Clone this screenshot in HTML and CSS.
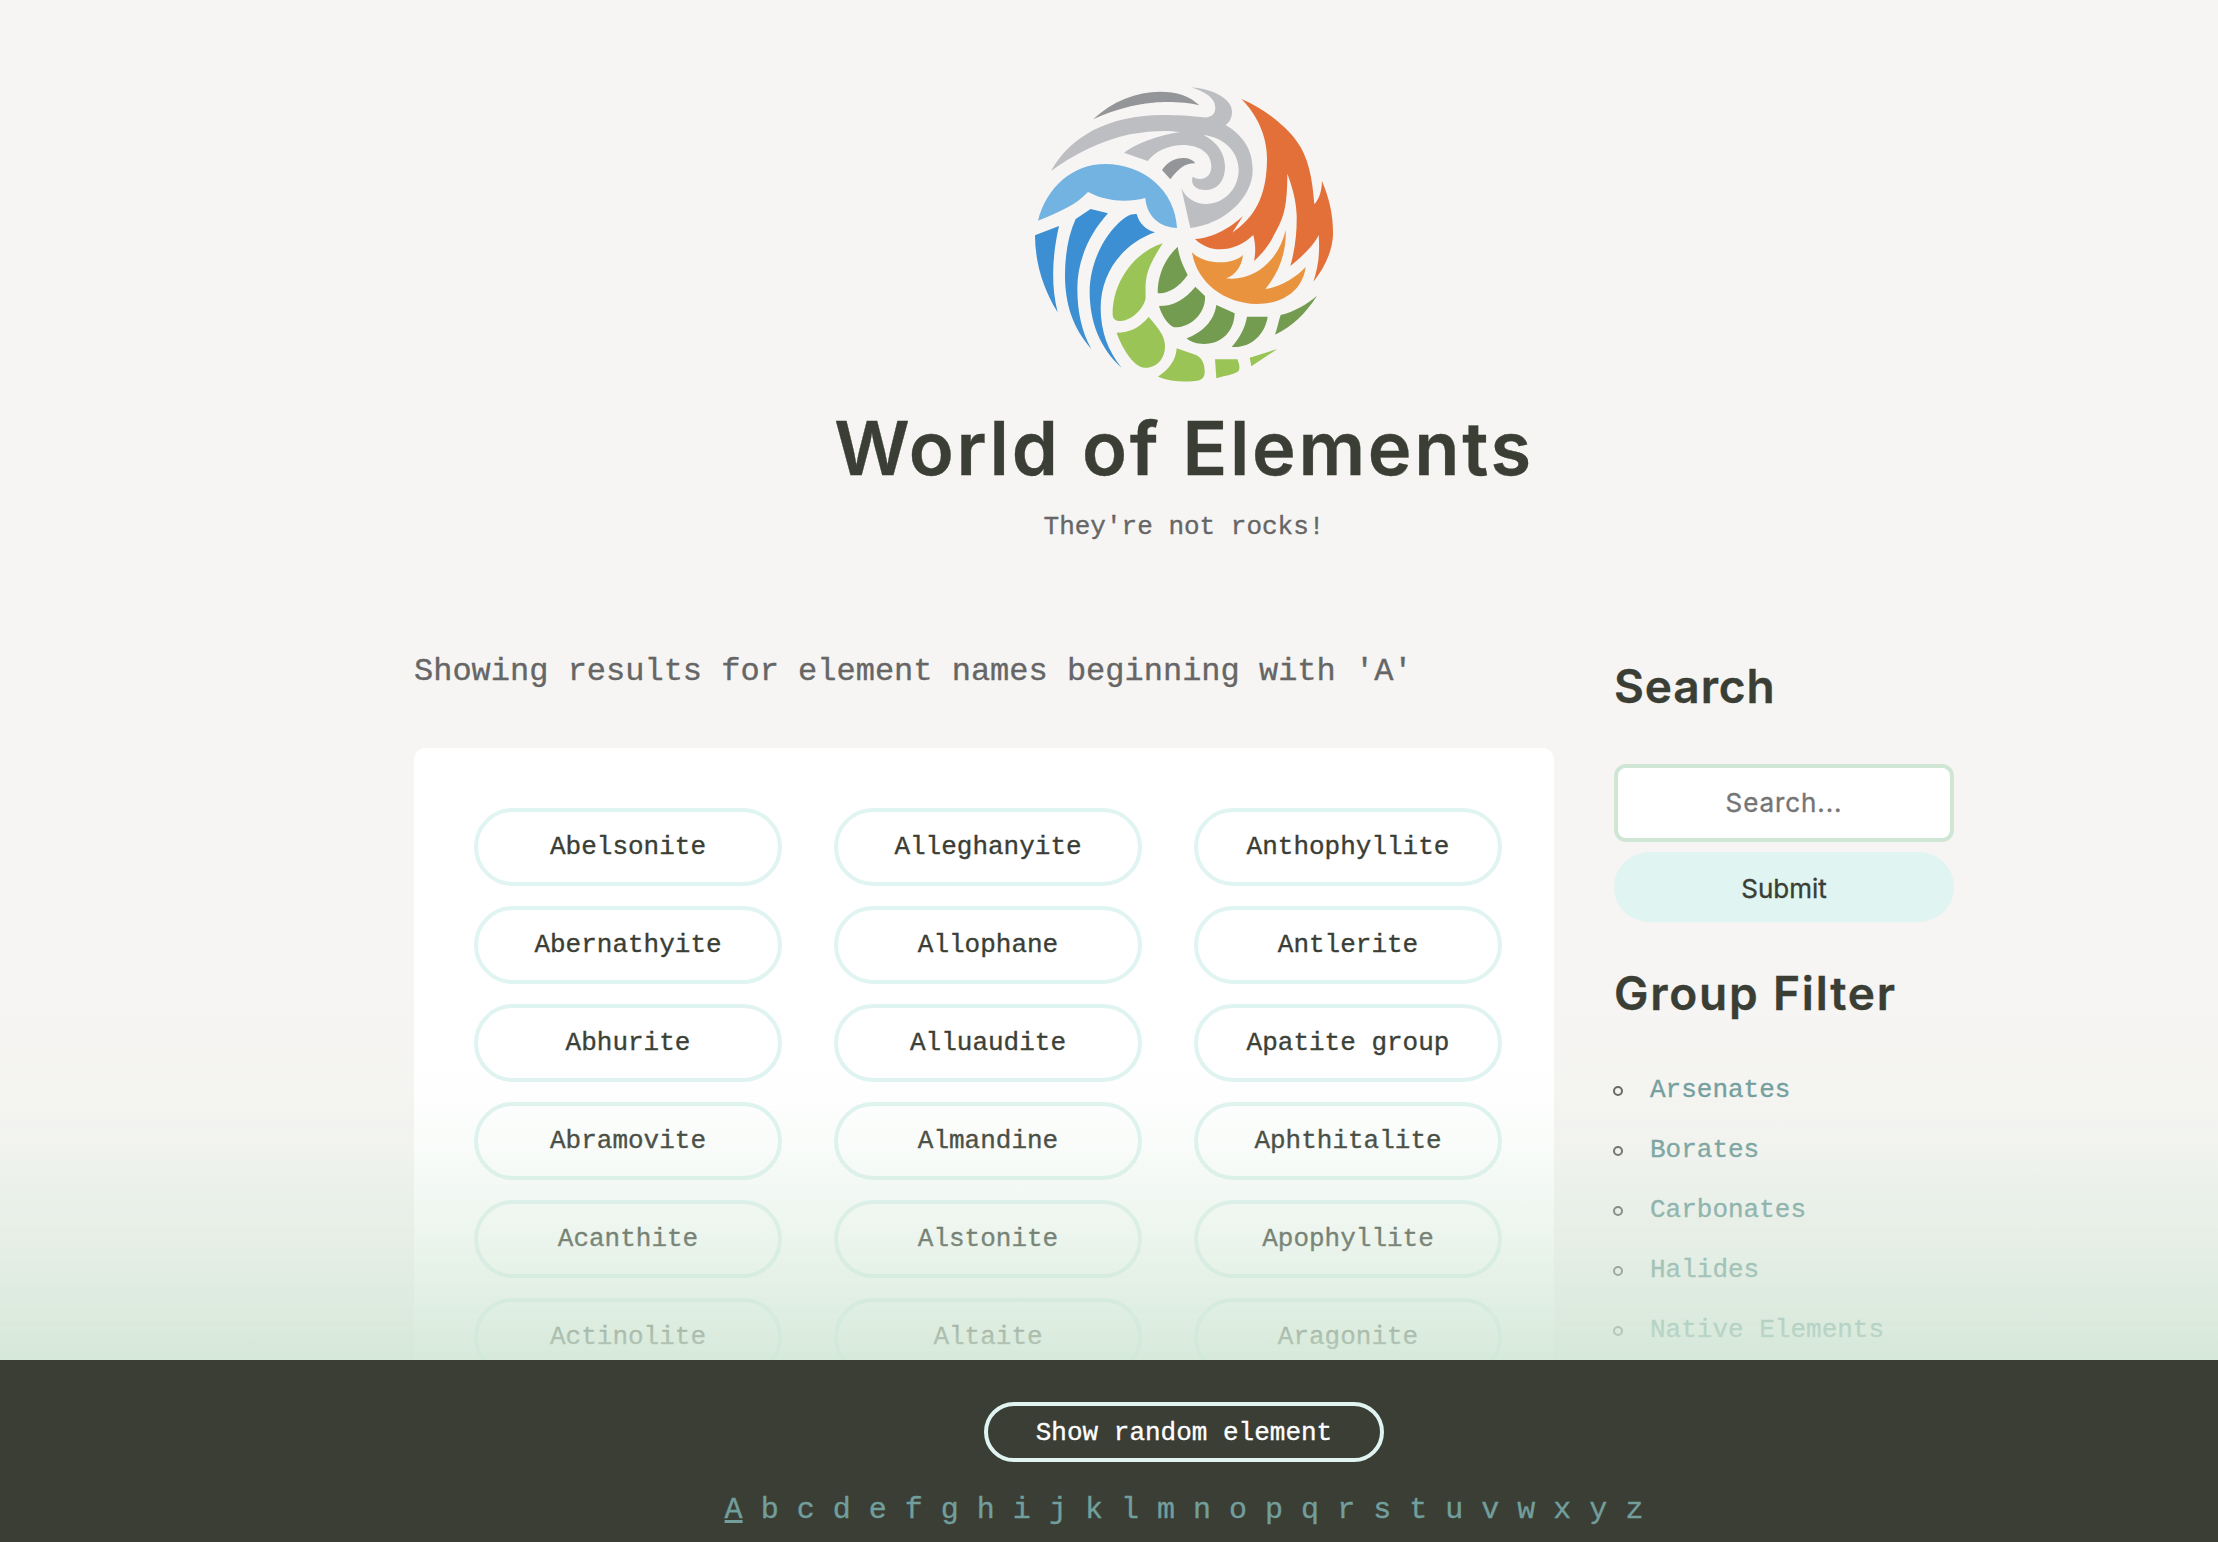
FILE: index.html
```html
<!DOCTYPE html>
<html lang="en">
<head>
<meta charset="utf-8">
<title>World of Elements</title>
<link rel="stylesheet" href="styles.css">
</head>
<body>
<header class="site-header">
  <svg class="logo" viewBox="0 0 990 960" role="img" aria-label="Four elements">
    <g fill="#939598">
      <path d="M219 133C278 78 350 50 420 50C470 50 510 63 538 91C500 81 440 79 400 83C340 88 280 105 219 133Z"/>
      <path d="M426 285C442 261 464 249 490 249C507 249 519 255 526 265C497 264 478 278 451 313Z"/>
    </g>
    <path fill="#bcbec2" d="M93 288C150 185 265 120 430 120C475 120 500 122 550 127C577 129 586 113 586 98C586 70 556 50 513 37C580 42 636 72 636 110C636 128 629 140 617 150C669 181 698 224 698 285C698 370 610 448 511 459L484 340C498 370 525 387 558 387C610 387 656 343 656 285C656 230 612 187 550 180C592 200 615 237 615 275C615 320 590 345 555 345C530 345 510 330 518 305C540 320 574 310 574 275C574 235 540 209 485 210C440 212 405 230 383 258L312 233C350 205 410 182 480 171C440 165 390 167 330 178C240 197 160 240 93 288Z"/>
    <path fill="#72b3e2" d="M54 437C80 335 160 267 255 267C370 267 465 345 471 459C420 457 380 425 376 369C320 383 260 380 204 351C168 390 120 410 54 437Z"/>
    <g fill="#3b8fd2">
      <path d="M45 481L117 453C97 540 92 630 113 712C68 640 45 560 45 481Z"/>
      <path d="M212 402L264 415C205 480 172 560 172 640C172 710 185 770 214 822C160 760 135 690 135 600C135 540 145 480 167 432Z"/>
      <path d="M350 417C357 445 378 465 405 472C300 510 242 600 242 700C242 770 265 830 305 878C240 820 209 740 209 650C209 580 240 500 290 450C315 423 335 415 350 417Z"/>
    </g>
    <g fill="#9ac456">
      <path d="M428 505C338 534 277 625 278 720C279 733 287 738 302 738C340 736 377 692 377 665C374 595 385 575 428 505Z"/>
      <path d="M290 773C330 773 358 759 386 726C420 765 435 785 435 815C435 850 410 878 378 878C342 883 302 810 290 773Z"/>
      <path d="M470 820L530 841C548 851 554 870 554 890C554 908 545 917 525 918C485 922 450 919 414 905C446 884 468 856 470 820Z"/>
      <path d="M585 853L652 853C660 870 661 888 652 891C635 900 610 903 589 910Z"/>
      <path d="M689 848L772 822L694 874Z"/>
    </g>
    <g fill="#749c51">
      <path d="M473 515C478 550 490 575 503 600C475 640 440 658 413 654C413 600 435 550 473 515Z"/>
      <path d="M417 693C460 693 495 674 526 635L555 663C558 713 514 759 462 757C442 748 425 720 417 693Z"/>
      <path d="M589 690L644 715C642 770 605 807 552 807C532 807 512 802 500 790C545 773 582 740 589 690Z"/>
      <path d="M681 725L743 725C735 780 690 820 635 816C658 790 675 760 681 725Z"/>
      <path d="M782 720C822 710 860 689 891 662C860 712 815 756 765 779C772 760 775 740 782 720Z"/>
    </g>
    <path fill="#e9933e" d="M516 532C550 568 635 573 669 540C665 575 645 602 618 610C700 620 775 560 797 465C800 525 780 590 736 642C780 636 825 610 857 576C847 650 785 687 710 687C610 685 530 620 516 532Z"/>
    <path fill="#e27038" d="M664 72C725 96 793 149 829 197C866 246 877 310 883 388C898 371 905 350 906 318C928 370 940 420 939 480C937 530 913 580 880 620C898 570 899 520 896 480C877 520 830 557 811 573C826 520 831 470 830 420C828 375 818 340 802 296C802 400 790 430 762 480C748 510 725 537 702 558C708 530 706 505 700 480C645 533 570 537 525 492C580 490 635 455 669 423L637 473C700 430 741 370 741 250C741 180 708 115 664 72Z"/>
  </svg>
  <h1 class="site-title">World of Elements</h1>
  <p class="tagline">They're not rocks!</p>
</header>

<div class="layout">
  <main>
    <p class="results">Showing results for element names beginning with 'A'</p>
    <div class="panel">
      <a class="pill">Abelsonite</a><a class="pill">Alleghanyite</a><a class="pill">Anthophyllite</a>
      <a class="pill">Abernathyite</a><a class="pill">Allophane</a><a class="pill">Antlerite</a>
      <a class="pill">Abhurite</a><a class="pill">Alluaudite</a><a class="pill">Apatite group</a>
      <a class="pill">Abramovite</a><a class="pill">Almandine</a><a class="pill">Aphthitalite</a>
      <a class="pill">Acanthite</a><a class="pill">Alstonite</a><a class="pill">Apophyllite</a>
      <a class="pill">Actinolite</a><a class="pill">Altaite</a><a class="pill">Aragonite</a>
    </div>
  </main>
  <aside>
    <h2 class="side-title side-title-search">Search</h2>
    <form class="search">
      <input class="search-input" type="text" placeholder="Search...">
      <button class="search-submit" type="button">Submit</button>
    </form>
    <h2 class="side-title side-title-group">Group Filter</h2>
    <ul class="groups">
      <li><a>Arsenates</a></li>
      <li><a>Borates</a></li>
      <li><a>Carbonates</a></li>
      <li><a>Halides</a></li>
      <li><a>Native Elements</a></li>
    </ul>
  </aside>
</div>

<footer class="dock">
  <a class="random">Show random element</a>
  <nav class="letters"><a class="current">A</a> <a>b</a> <a>c</a> <a>d</a> <a>e</a> <a>f</a> <a>g</a> <a>h</a> <a>i</a> <a>j</a> <a>k</a> <a>l</a> <a>m</a> <a>n</a> <a>o</a> <a>p</a> <a>q</a> <a>r</a> <a>s</a> <a>t</a> <a>u</a> <a>v</a> <a>w</a> <a>x</a> <a>y</a> <a>z</a></nav>
</footer>
</body>
</html>
```
FILE: styles.css
```css
*, *::before { box-sizing: border-box; margin: 0; padding: 0; }

html, body { height: 100%; overflow: hidden; }

body {
  padding-left: 150px;
  background: #f6f5f3;
  color: #666;
  font: 26px/40px "Liberation Mono", monospace;
  -webkit-text-stroke: 0.35px;
}

.site-header {
  display: flex;
  flex-direction: column;
  align-items: center;
  padding-top: 75px;
}

.logo { width: 330px; height: 320px; margin-left: 2px; }

.site-title {
  margin-top: 9px;
  color: #3a3e35;
  font: 600 74px/88px Inter, sans-serif;
  letter-spacing: 2.7px;
}

.tagline { margin-top: 15px; }

.layout {
  display: grid;
  grid-template-columns: 1140px 340px;
  column-gap: 60px;
  width: 1540px;
  margin: 101px auto 0;
}

.results { font-size: 32px; line-height: 48px; }

.panel {
  display: grid;
  grid-template-columns: repeat(3, 308px);
  gap: 20px 52px;
  margin-top: 52px;
  padding: 60px;
  border-radius: 12px;
  background: #fff;
}

.pill {
  height: 78px;
  border: 4px solid #e0f4f1;
  border-radius: 39px;
  color: #3a3e35;
  line-height: 70px;
  text-align: center;
}

.side-title {
  color: #3a3e35;
  font: 600 46px/56px Inter, sans-serif;
}

.side-title-search { margin-top: 10px; letter-spacing: 0.9px; }
.side-title-group { margin-top: 43px; letter-spacing: 1.8px; }

.search {
  display: flex;
  flex-direction: column;
  gap: 10px;
  margin-top: 50px;
}

.search-input {
  width: 100%;
  height: 78px;
  padding-bottom: 2px;
  border: 4px solid #d0e6d4;
  border-radius: 12px;
  background: #fff;
  font: 26px Inter, sans-serif;
  letter-spacing: 0.9px;
  text-align: center;
}

.search-input::placeholder { color: #757575; }

.search-submit {
  height: 70px;
  padding-top: 2px;
  border: 0;
  border-radius: 35px;
  background: #e0f4f1;
  color: #3a3e35;
  font: 26px Inter, sans-serif;
}

.groups { margin-top: 39px; list-style: none; }

.groups li {
  display: flex;
  align-items: center;
  gap: 27px;
  height: 60px;
  margin-left: -1px;
  color: #729e9c;
}

.groups li::before {
  content: "";
  width: 10px;
  height: 10px;
  margin-top: 2px;
  border: 2px solid #666;
  border-radius: 50%;
}

.dock {
  position: fixed;
  right: 0;
  bottom: 0;
  left: 0;
  display: flex;
  flex-direction: column;
  align-items: center;
  height: 182px;
  padding: 42px 0 0 150px;
  background: #3a3e35;
}

.dock::before {
  content: "";
  position: absolute;
  right: 0;
  bottom: 100%;
  left: 0;
  height: 360px;
  background: linear-gradient(
    rgba(208, 230, 212, 0),
    rgba(208, 230, 212, 0.03) 25%,
    rgba(208, 230, 212, 0.11) 39%,
    rgba(208, 230, 212, 0.41) 66%,
    rgba(208, 230, 212, 0.76) 93%,
    rgba(208, 230, 212, 0.87)
  );
  pointer-events: none;
}

.random {
  width: 400px;
  height: 60px;
  border: 4px solid #e0f4f1;
  border-radius: 30px;
  color: #fff;
  line-height: 54px;
  text-align: center;
}

.letters {
  margin-top: 28px;
  color: #729e9c;
  font-size: 30px;
}

.current { text-decoration: underline; }
```
